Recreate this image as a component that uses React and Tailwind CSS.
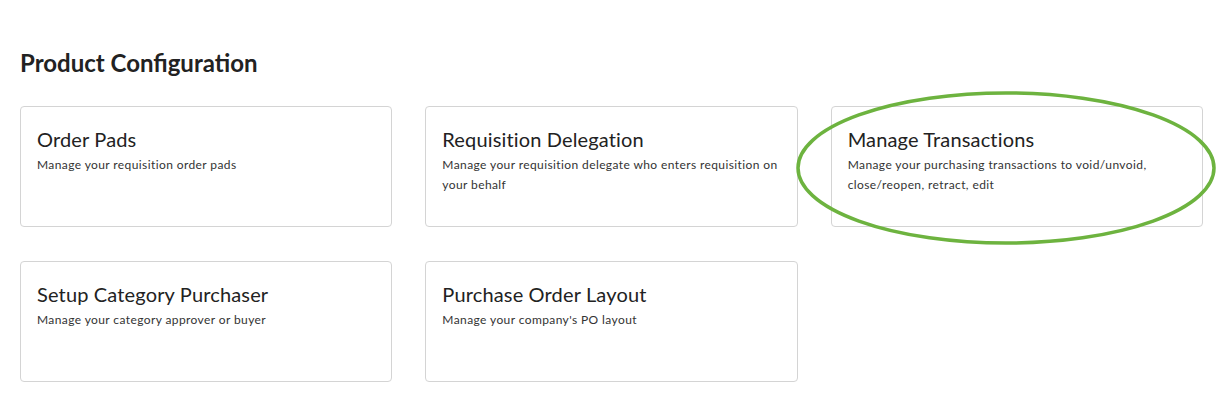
import React from 'react'

const cards = [
  { title: 'Order Pads', text: 'Manage your requisition order pads' },
  { title: 'Requisition Delegation', text: 'Manage your requisition delegate who enters requisition on your behalf' },
  { title: 'Manage Transactions', text: 'Manage your purchasing transactions to void/unvoid, close/reopen, retract, edit', circled: true },
  { title: 'Setup Category Purchaser', text: 'Manage your category approver or buyer' },
  { title: 'Purchase Order Layout', text: "Manage your company's PO layout" },
]

function Card({ title, text, circled }) {
  return (
    <div className="relative h-[121px] rounded-[4px] border border-[#d4d4d4] bg-white px-4 pt-[18px]">
      <h3 className="text-[20px] leading-[28px] tracking-[0.15px] text-[#222]">{title}</h3>
      <p className="mt-[2px] text-[12px] leading-[20px] tracking-[0.4px] text-[#333]">{text}</p>
      {circled && (
        <svg
          className="pointer-events-none absolute left-[-36px] top-[-15px] overflow-visible"
          width="420"
          height="154"
          viewBox="0 0 420 154"
        >
          <ellipse cx="210" cy="76" rx="208" ry="75" fill="none" stroke="#6db33f" strokeWidth="3.5" />
        </svg>
      )}
    </div>
  )
}

export default function App() {
  return (
    <div className="min-h-screen bg-white pl-5 pr-[15px] pt-[49px]" style={{ fontFamily: 'Lato, "Open Sans", sans-serif' }}>
      <h1 className="text-[24px] font-bold leading-[28px] text-[#222]">Product Configuration</h1>
      <div className="mt-[29px] grid grid-cols-3 gap-x-[33px] gap-y-[34px]">
        {cards.map((c) => (
          <Card key={c.title} {...c} />
        ))}
      </div>
    </div>
  )
}
